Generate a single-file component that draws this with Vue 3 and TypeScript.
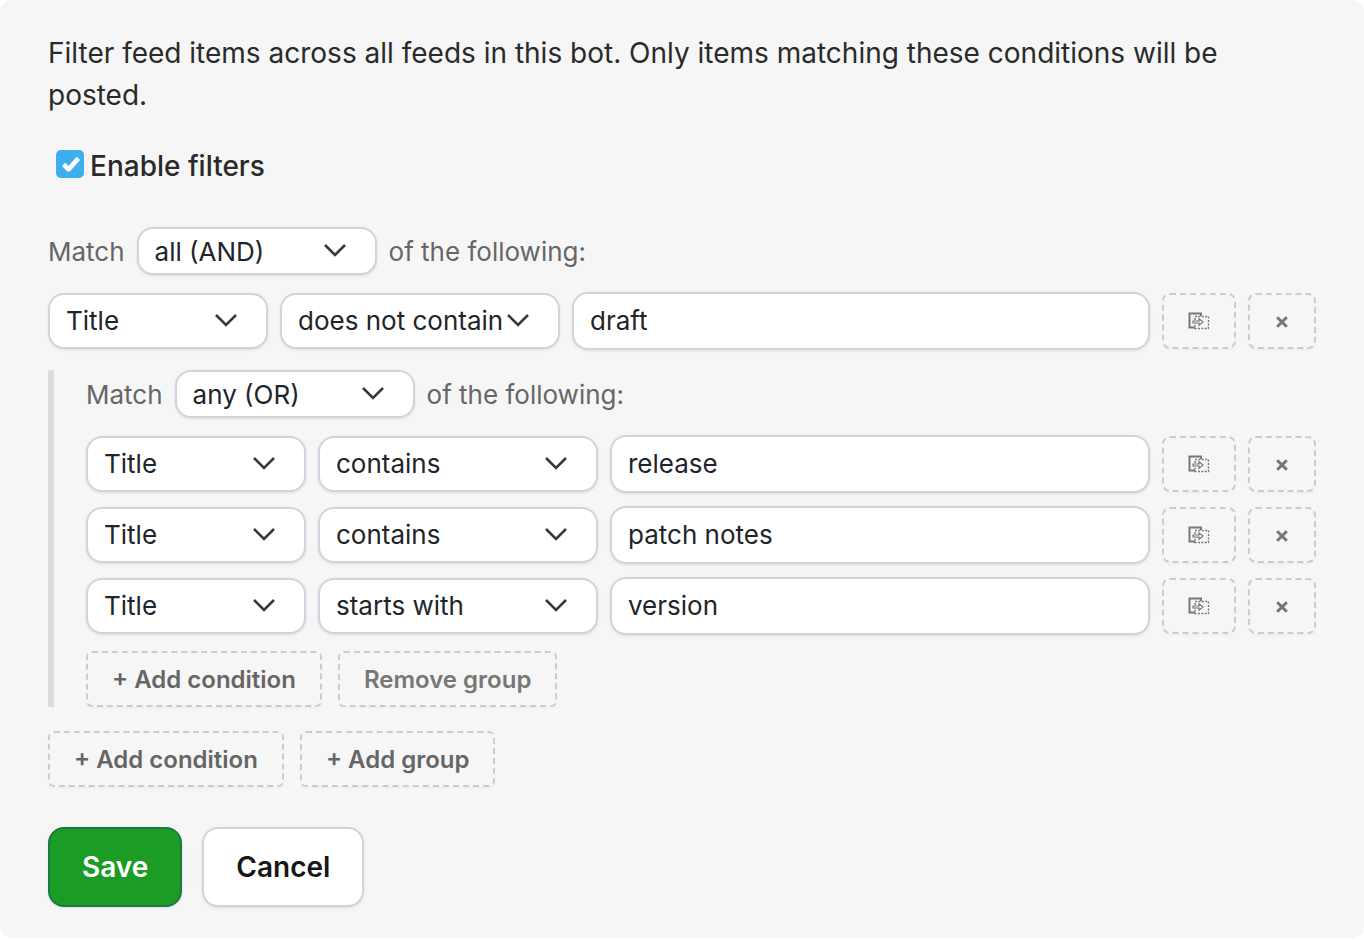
<script setup lang="ts">
interface Cond { field: string; op: string; value: string }
const top: Cond = { field: 'Title', op: 'does not contain', value: 'draft' }
const inner: Cond[] = [
  { field: 'Title', op: 'contains', value: 'release' },
  { field: 'Title', op: 'contains', value: 'patch notes' },
  { field: 'Title', op: 'starts with', value: 'version' },
]
</script>

<template>
  <div class="page">
    <p class="intro">Filter feed items across all feeds in this bot. Only items matching these conditions will be posted.</p>
    <label class="enable">
      <span class="check">
        <svg viewBox="0 0 28 28" width="28" height="28"><path d="M7.6 14.4l5 5L22.4 8.4" fill="none" stroke="#fff" stroke-width="4.6" stroke-linejoin="round" /></svg>
      </span>
      <span>Enable filters</span>
    </label>

    <div class="match-row first">
      <span class="muted">Match</span>
      <div class="select small">all (AND)
        <svg class="chev" viewBox="0 0 24 24" width="24" height="24"><path d="M2 7l10 10L22 7" fill="none" stroke="#343a40" stroke-width="2.6" /></svg>
      </div>
      <span class="muted">of the following:</span>
    </div>

    <div class="cond">
      <div class="select field">{{ top.field }}
        <svg class="chev" viewBox="0 0 24 24" width="24" height="24"><path d="M2 7l10 10L22 7" fill="none" stroke="#343a40" stroke-width="2.6" /></svg>
      </div>
      <div class="select op">{{ top.op }}
        <svg class="chev" viewBox="0 0 24 24" width="24" height="24"><path d="M2 7l10 10L22 7" fill="none" stroke="#343a40" stroke-width="2.6" /></svg>
      </div>
      <div class="input">{{ top.value }}</div>
      <button class="icon-btn">
        <svg viewBox="0 0 22 18" width="22" height="18" fill="none" stroke="#777"><path d="M7 15.5H1.5V1.5H13V4" stroke-width="2"/><path d="M7 4.5h13.5v12H7z" stroke-width="1.4" stroke-dasharray="2 1.4"/><path d="M5 9h6V6.8l4 3.2-4 3.2V11H5z" stroke-width="1.2" fill="#f6f6f6"/></svg>
      </button>
      <button class="icon-btn">
        <svg class="x" viewBox="0 0 12 12" width="12" height="12"><path d="M1.2 1.2l9.6 9.6M10.8 1.2l-9.6 9.6" stroke="#777" stroke-width="3"/></svg>
      </button>
    </div>

    <div class="group">
      <div class="match-row">
        <span class="muted">Match</span>
        <div class="select small">any (OR)
          <svg class="chev" viewBox="0 0 24 24" width="24" height="24"><path d="M2 7l10 10L22 7" fill="none" stroke="#343a40" stroke-width="2.6" /></svg>
        </div>
        <span class="muted">of the following:</span>
      </div>
      <div class="conds">
        <div v-for="c in inner" :key="c.value" class="cond">
          <div class="select field">{{ c.field }}
            <svg class="chev" viewBox="0 0 24 24" width="24" height="24"><path d="M2 7l10 10L22 7" fill="none" stroke="#343a40" stroke-width="2.6" /></svg>
          </div>
          <div class="select op">{{ c.op }}
            <svg class="chev" viewBox="0 0 24 24" width="24" height="24"><path d="M2 7l10 10L22 7" fill="none" stroke="#343a40" stroke-width="2.6" /></svg>
          </div>
          <div class="input">{{ c.value }}</div>
          <button class="icon-btn">
            <svg viewBox="0 0 22 18" width="22" height="18" fill="none" stroke="#777"><path d="M7 15.5H1.5V1.5H13V4" stroke-width="2"/><path d="M7 4.5h13.5v12H7z" stroke-width="1.4" stroke-dasharray="2 1.4"/><path d="M5 9h6V6.8l4 3.2-4 3.2V11H5z" stroke-width="1.2" fill="#f6f6f6"/></svg>
          </button>
          <button class="icon-btn">
            <svg class="x" viewBox="0 0 12 12" width="12" height="12"><path d="M1.2 1.2l9.6 9.6M10.8 1.2l-9.6 9.6" stroke="#777" stroke-width="3"/></svg>
          </button>
        </div>
      </div>
      <div class="actions">
        <button class="dashed">+ Add condition</button>
        <button class="dashed light">Remove group</button>
      </div>
    </div>

    <div class="actions outer">
      <button class="dashed">+ Add condition</button>
      <button class="dashed">+ Add group</button>
    </div>

    <div class="footer">
      <button class="btn save">Save</button>
      <button class="btn cancel">Cancel</button>
    </div>
  </div>
</template>

<style>
html, body { margin: 0; background: #fff; }
</style>

<style scoped>
.page {
  box-sizing: border-box;
  width: 1364px;
  height: 938px;
  padding: 32px 48px 0;
  background: #f6f6f6;
  border-radius: 12px;
  font-family: Inter, "Liberation Sans", sans-serif;
  color: #212529;
  font-size: 26px;
}
.intro { margin: 0; font-size: 28px; line-height: 42px; width: 1220px; color: #2a2a2a; }
.enable { display: flex; align-items: center; gap: 6px; margin: 34px 0 0 8px; height: 32px; font-size: 28px; font-weight: 500; color: #2a2a2a; }
.check { width: 28px; height: 28px; border-radius: 5px; background: #3daeee; display: block; margin-top: -4px; }
.check svg { display: block; }
.match-row { display: flex; align-items: center; gap: 12px; height: 48px; }
.match-row.first { margin-top: 45px; }
.muted { color: #666; }
.select {
  box-sizing: border-box;
  position: relative;
  display: flex;
  align-items: center;
  height: 56px;
  padding: 0 0 2px 16px;
  background: #fff;
  border: 2px solid #d0d4dc;
  border-radius: 16px;
  box-shadow: 0 1px 3px rgba(0, 0, 0, .1);
  white-space: nowrap;
  flex: none;
}
.chev { position: absolute; right: 28px; top: 50%; margin-top: -13px; }
.select.small { width: 240px; height: 48px; padding: 0 0 0 16px; }
.field { width: 220px; }
.op { width: 280px; }
.input {
  box-sizing: border-box;
  flex: 1;
  height: 58px;
  display: flex;
  align-items: center;
  padding: 0 0 2px 16px;
  background: #fff;
  border: 2px solid #d0d4dc;
  border-radius: 16px;
  box-shadow: 0 1px 3px rgba(0, 0, 0, .1);
}
.cond { display: flex; align-items: center; gap: 12px; margin-top: 17px; height: 58px; }
.icon-btn {
  box-sizing: border-box;
  width: 74px;
  height: 56px;
  padding: 0;
  display: flex;
  align-items: center;
  justify-content: center;
  background: transparent;
  border: 2px dashed #ccc;
  border-radius: 8px;
  box-shadow: 0 1px 2px rgba(0, 0, 0, .04);
  flex: none;
}
.icon-btn + .icon-btn { width: 68px; }
.x { margin-top: 2px; }
.group {
  margin-top: 20px;
  padding-left: 32px;
  border-left: 6px solid #dcdcdc;
  height: 337px;
}
.conds { display: flex; flex-direction: column; gap: 13px; margin-top: 17px; }
.conds .cond { margin-top: 0; }
.actions { display: flex; gap: 16px; margin-top: 16px; }
.actions.outer { margin-top: 24px; }
.dashed {
  box-sizing: border-box;
  height: 56px;
  padding: 0 24px;
  background: transparent;
  border: 2px dashed #ccc;
  border-radius: 6px;
  box-shadow: 0 1px 2px rgba(0, 0, 0, .04);
  font: 600 24px Inter, "Liberation Sans", sans-serif;
  color: #666;
}
.dashed.light { color: #777; }
.footer { display: flex; gap: 20px; margin-top: 40px; }
.btn {
  box-sizing: border-box;
  height: 80px;
  padding: 0 32px;
  border-radius: 16px;
  font: 600 28px Inter, "Liberation Sans", sans-serif;
}
.save { background: #1a9c25; border: 2px solid #177a45; color: #fff; box-shadow: 0 1px 3px rgba(0,0,0,.1); }
.cancel { background: #fff; border: 2px solid #d0d4dc; color: #161616; box-shadow: 0 1px 3px rgba(0,0,0,.1); }
</style>
